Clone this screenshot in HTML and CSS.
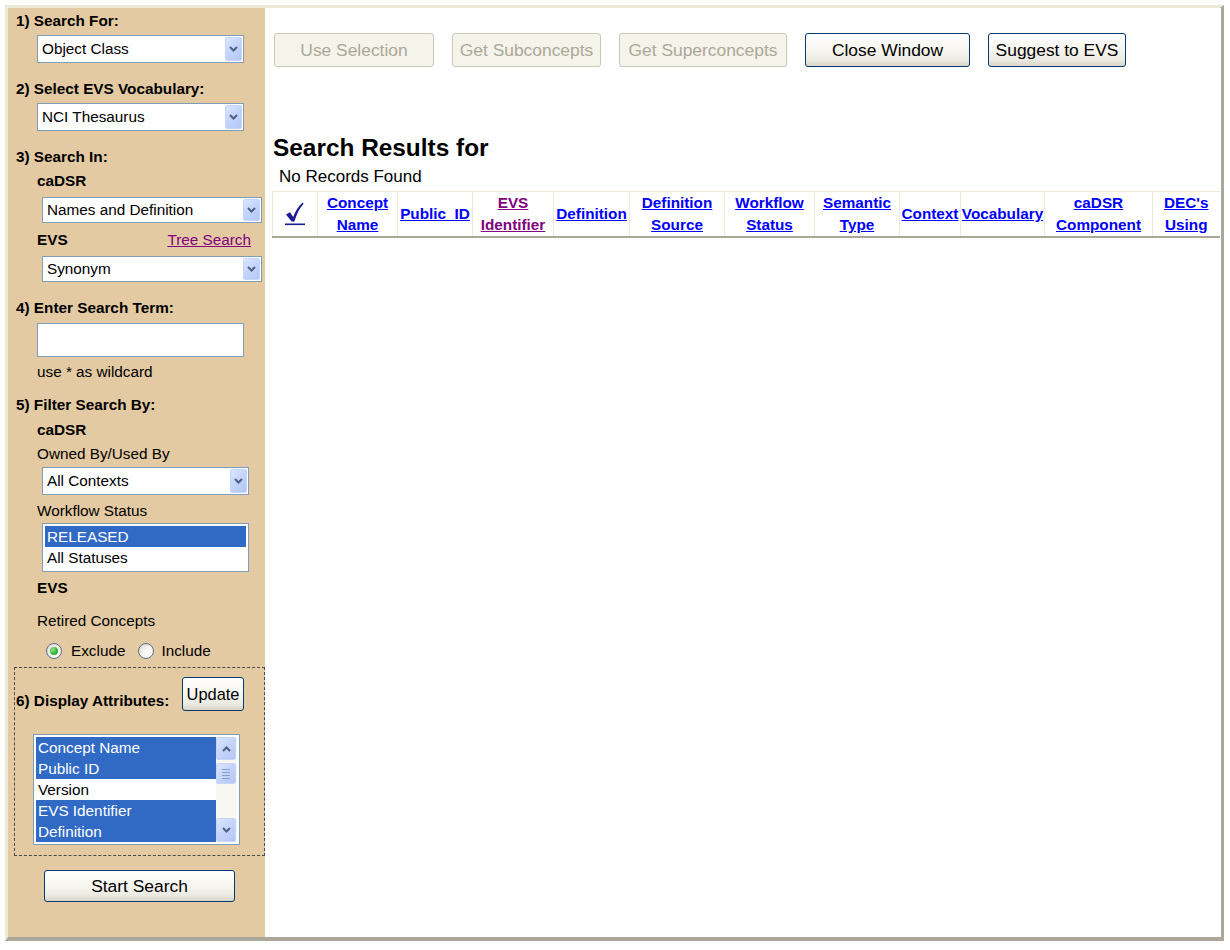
FILE: index.html
```html
<!DOCTYPE html>
<html>
<head>
<meta charset="utf-8">
<title>EVS Search</title>
<link rel="stylesheet" href="styles.css">
</head>
<body>
<div class="frame">
  <aside class="panel">
    <div class="step">1) Search For:</div>
    <div class="select sel-a mt4"><span class="val">Object Class</span><span class="arrow"><svg width="9" height="6" viewBox="0 0 9 6"><path d="M1 1 L4.5 4.5 L8 1" fill="none" stroke="#4d6185" stroke-width="2"/></svg></span></div>

    <div class="step mt16">2) Select EVS Vocabulary:</div>
    <div class="select sel-a mt4"><span class="val">NCI Thesaurus</span><span class="arrow"><svg width="9" height="6" viewBox="0 0 9 6"><path d="M1 1 L4.5 4.5 L8 1" fill="none" stroke="#4d6185" stroke-width="2"/></svg></span></div>

    <div class="step mt16">3) Search In:</div>
    <div class="sub bold mt4">caDSR</div>
    <div class="select sel-b mt6"><span class="val">Names and Definition</span><span class="arrow"><svg width="9" height="6" viewBox="0 0 9 6"><path d="M1 1 L4.5 4.5 L8 1" fill="none" stroke="#4d6185" stroke-width="2"/></svg></span></div>
    <div class="sub evsrow mt7"><span class="bold">EVS</span><a class="link visited" href="#">Tree Search</a></div>
    <div class="select sel-b mt6"><span class="val">Synonym</span><span class="arrow"><svg width="9" height="6" viewBox="0 0 9 6"><path d="M1 1 L4.5 4.5 L8 1" fill="none" stroke="#4d6185" stroke-width="2"/></svg></span></div>

    <div class="step mt16">4) Enter Search Term:</div>
    <div class="textbox mt5"></div>
    <div class="sub mt5">use * as wildcard</div>

    <div class="step mt13">5) Filter Search By:</div>
    <div class="sub bold mt5">caDSR</div>
    <div class="sub mt4">Owned By/Used By</div>
    <div class="select sel-c mt3"><span class="val">All Contexts</span><span class="arrow"><svg width="9" height="6" viewBox="0 0 9 6"><path d="M1 1 L4.5 4.5 L8 1" fill="none" stroke="#4d6185" stroke-width="2"/></svg></span></div>
    <div class="sub mt6">Workflow Status</div>
    <div class="listbox status mt2">
      <div class="opt on">RELEASED</div>
      <div class="opt">All Statuses</div>
    </div>
    <div class="sub bold mt6">EVS</div>
    <div class="sub mt13">Retired Concepts</div>
    <div class="radios mt10">
      <span class="radio"><span class="dot"></span></span>
      <span class="rlabel first">Exclude</span>
      <span class="radio"></span>
      <span class="rlabel">Include</span>
    </div>

    <div class="attrbox mt6">
      <div class="attrhead">
        <span class="step6">6) Display Attributes:</span>
        <button class="btn update">Update</button>
      </div>
      <div class="listbox attrs">
        <div class="opts">
          <div class="opt on">Concept Name</div>
          <div class="opt on">Public ID</div>
          <div class="opt">Version</div>
          <div class="opt on">EVS Identifier</div>
          <div class="opt on">Definition</div>
        </div>
        <div class="scroll">
          <div class="sbtn up"><svg width="9" height="6" viewBox="0 0 9 6"><path d="M1 5 L4.5 1.5 L8 5" fill="none" stroke="#4d6185" stroke-width="2"/></svg></div>
          <div class="thumb"><span class="grip"></span><span class="grip"></span><span class="grip"></span><span class="grip"></span></div>
          <div class="track"></div>
          <div class="sbtn down"><svg width="9" height="6" viewBox="0 0 9 6"><path d="M1 1 L4.5 4.5 L8 1" fill="none" stroke="#4d6185" stroke-width="2"/></svg></div>
        </div>
      </div>
    </div>

    <button class="btn start mt14">Start Search</button>
  </aside>

  <main class="main">
    <div class="btnrow">
      <button class="btn dis b-use">Use Selection</button>
      <button class="btn dis b-sub">Get Subconcepts</button>
      <button class="btn dis b-super">Get Superconcepts</button>
      <button class="btn b-close">Close Window</button>
      <button class="btn b-suggest">Suggest to EVS</button>
    </div>
    <h1 class="title">Search Results for</h1>
    <div class="norec">No Records Found</div>
    <table class="results">
      <thead>
        <tr>
          <th class="c1"><a class="check" href="#"><svg width="20" height="24" viewBox="0 0 20 24"><path d="M1 12.5 L5 10.2 L8.2 15 C10.4 9.2 13.4 4.2 17.6 0.6 L18.6 1.8 C14.4 6.4 11.4 12.4 9.4 19.6 L6.6 19.6 Z" fill="#1b1b8f"/><rect x="0" y="21.5" width="20" height="1.6" fill="#1b1b8f"/></svg></a></th>
          <th class="c2"><a class="link" href="#">Concept<br>Name</a></th>
          <th class="c3"><a class="link" href="#">Public_ID</a></th>
          <th class="c4"><a class="link visited" href="#">EVS<br>Identifier</a></th>
          <th class="c5"><a class="link" href="#">Definition</a></th>
          <th class="c6"><a class="link" href="#">Definition<br>Source</a></th>
          <th class="c7"><a class="link" href="#">Workflow<br>Status</a></th>
          <th class="c8"><a class="link" href="#">Semantic<br>Type</a></th>
          <th class="c9"><a class="link" href="#">Context</a></th>
          <th class="c10"><a class="link" href="#">Vocabulary</a></th>
          <th class="c11"><a class="link" href="#">caDSR<br>Component</a></th>
          <th class="c12"><a class="link" href="#">DEC's<br>Using</a></th>
        </tr>
      </thead>
    </table>
  </main>
</div>
</body>
</html>
```

FILE: styles.css
```css
* { box-sizing: border-box; }
html, body { margin: 0; padding: 0; background: #fff; }
body { font-family: "Liberation Sans", Arial, sans-serif; color: #000; }

.frame {
  margin: 5px 0 0 5px;
  width: 1219px;
  height: 936px;
  display: flex;
  border-top: 3px solid #ece9d8;
  border-left: 3px solid #ece9d8;
  border-right: 4px solid #aca899;
  border-bottom: 4px solid #aca899;
}

/* ---------- left panel ---------- */
.panel {
  width: 257px;
  flex: none;
  background: #e4caa2;
  padding-top: 3px;
  font-size: 15.3px;
  line-height: 20px;
  display: flex;
  flex-direction: column;
  align-items: flex-start;
}
.mt2 { margin-top: 2px; }
.mt3 { margin-top: 3px; }
.mt4 { margin-top: 4px; }
.mt5 { margin-top: 5px; }
.mt6 { margin-top: 6px; }
.mt7 { margin-top: 7px; }
.mt10 { margin-top: 10px; }
.mt13 { margin-top: 13px; }
.mt14 { margin-top: 14px; }
.mt16 { margin-top: 16px; }

.step { font-weight: bold; margin-left: 8px; height: 20px; }
.sub { margin-left: 29px; height: 20px; }
.bold { font-weight: bold; }

.select {
  display: flex;
  align-items: center;
  justify-content: space-between;
  background: #fff;
  border: 1px solid #7f9db9;
  padding: 1px 1px 1px 4px;
}
.select .val { white-space: nowrap; }
.arrow {
  width: 17px;
  align-self: stretch;
  display: flex;
  align-items: center;
  justify-content: center;
  background: linear-gradient(135deg, #dbe6fe 0%, #c3d4fb 50%, #b3c7f5 100%);
  border: 1px solid #c6d5fa;
  border-radius: 2px;
}
.sel-a { width: 207px; height: 28px; margin-left: 29px; }
.sel-b { width: 220px; height: 26px; margin-left: 34px; }
.sel-c { width: 207px; height: 28px; margin-left: 34px; }

.evsrow {
  width: 214px;
  display: flex;
  justify-content: space-between;
}
.link { color: #0000ff; text-decoration: underline; }
.link.visited { color: #800080; }

.textbox {
  width: 207px;
  height: 34px;
  margin-left: 29px;
  background: #fff;
  border: 1px solid #7f9db9;
}

.listbox {
  background: #fff;
  border: 1px solid #7f9db9;
  padding: 2px;
}
.opt { height: 21px; line-height: 21px; padding-left: 2px; white-space: nowrap; }
.opt.on { background: #316ac5; color: #fff; }
.status { width: 207px; height: 49px; margin-left: 34px; }

.radios { display: flex; align-items: center; margin-left: 38px; height: 20px; }
.radio {
  width: 16px;
  height: 16px;
  border-radius: 50%;
  border: 1px solid #5a7190;
  background: radial-gradient(circle at 65% 65%, #ffffff 0%, #f3f2ec 45%, #d2cfc2 100%);
  display: flex;
  align-items: center;
  justify-content: center;
}
.dot {
  width: 8px;
  height: 8px;
  border-radius: 50%;
  background: radial-gradient(circle at 35% 35%, #8fe88f 0%, #3fbb3f 50%, #1b8a1b 100%);
}
.rlabel { margin-left: 9px; }
.rlabel.first { margin-right: 13px; margin-left: 9px; }
.radios .rlabel:last-child { margin-left: 7px; }

.attrbox {
  width: 251px;
  height: 189px;
  margin-left: 6px;
  border: 1px dashed #4a4a4a;
  padding-left: 1px;
}
.attrhead {
  display: flex;
  align-items: flex-end;
  justify-content: space-between;
  margin-top: 9px;
  padding-right: 20px;
}
.step6 { font-weight: bold; line-height: 20px; white-space: nowrap; }

.attrs {
  width: 207px;
  height: 111px;
  margin-top: 23px;
  margin-left: 17px;
  display: flex;
}
.opts { flex: 1; }
.scroll {
  width: 21px;
  display: flex;
  flex-direction: column;
  background: #f7f6f1;
}
.sbtn, .thumb {
  width: 20px;
  display: flex;
  flex-direction: column;
  align-items: center;
  justify-content: center;
  background: linear-gradient(135deg, #dbe6fe 0%, #c3d4fb 50%, #b3c7f5 100%);
  border: 1px solid #c6d5fa;
  border-radius: 2px;
}
.sbtn.up { height: 23px; }
.thumb { height: 21px; margin-top: 3px; gap: 2px; }
.grip { width: 8px; height: 1px; background: #8aa0cf; }
.track { flex: 1; }
.sbtn.down { height: 24px; }

/* ---------- buttons ---------- */
.btn {
  font-family: "Liberation Sans", Arial, sans-serif;
  font-size: 17.4px;
  color: #000;
  height: 34px;
  padding: 0;
  border: 1px solid #003c74;
  border-radius: 3px;
  background: linear-gradient(to bottom, #ffffff 0%, #f7f6f0 45%, #ecebe3 80%, #d9d6c8 100%);
  white-space: nowrap;
}
.btn.dis {
  border-color: #c9c7ba;
  background: #f5f4ea;
  color: #aca899;
}
.update { width: 62px; font-size: 16.4px; }
.start { width: 191px; height: 32px; margin-left: 36px; }

/* ---------- main ---------- */
.main {
  flex: 1;
  background: #fff;
  padding: 0 1px 0 7px;
}
.btnrow { display: flex; gap: 18px; margin: 25px 0 0 2px; }
.b-use { width: 160px; }
.b-sub { width: 149px; }
.b-super { width: 168px; }
.b-close { width: 165px; }
.b-suggest { width: 138px; }

.title {
  margin: 67px 0 0 1px;
  font-size: 24.4px;
  font-weight: bold;
  line-height: 28px;
}
.norec {
  margin: 5px 0 0 7px;
  font-size: 17px;
  line-height: 20px;
}

.results {
  margin-top: 4px;
  width: 947px;
  table-layout: fixed;
  border-collapse: collapse;
  border-top: 1px solid #ece9d8;
  border-left: 1px solid #ece9d8;
  border-bottom: 2px solid #aca899;
}
.results th {
  height: 44px;
  padding: 0;
  border-left: 1px solid #ece9d8;
  font-size: 15.3px;
  font-weight: bold;
  line-height: 22px;
  text-align: center;
  vertical-align: middle;
  white-space: nowrap;
}
.check { display: inline-block; vertical-align: middle; line-height: 0; }
.c1 { width: 45px; }
.c2 { width: 80px; }
.c3 { width: 75px; }
.c4 { width: 81px; }
.c5 { width: 76px; }
.c6 { width: 95px; }
.c7 { width: 90px; }
.c8 { width: 85px; }
.c9 { width: 61px; }
.c10 { width: 84px; }
.c11 { width: 108px; }
.c12 { width: 67px; }
```
